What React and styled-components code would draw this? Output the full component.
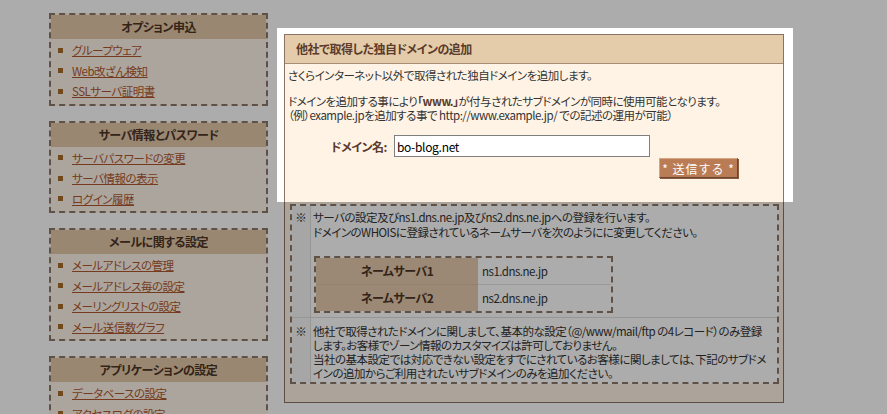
import React from "react";
import styled, { createGlobalStyle } from "styled-components";

const menus = [
    {
        title: "オプション申込",
        items: ["グループウェア", "Web改ざん検知", "SSLサーバ証明書"],
    },
    {
        title: "サーバ情報とパスワード",
        items: ["サーバパスワードの変更", "サーバ情報の表示", "ログイン履歴"],
    },
    {
        title: "メールに関する設定",
        items: ["メールアドレスの管理", "メールアドレス毎の設定", "メーリングリストの設定", "メール送信数グラフ"],
    },
    {
        title: "アプリケーションの設定",
        items: ["データベースの設定", "アクセスログの設定", "CGI・SSIの設定"],
    },
];

const nameServers = [
    { label: "ネームサーバ1", value: "ns1.dns.ne.jp" },
    { label: "ネームサーバ2", value: "ns2.dns.ne.jp" },
];

export default function App() {
    return (
        <>
            <GlobalStyle />
            <Page>
                <Sidebar>
                    {menus.map((menu) => (
                        <MenuBox key={menu.title}>
                            <MenuTitle>{menu.title}</MenuTitle>
                            <MenuList>
                                {menu.items.map((item) => (
                                    <MenuItem key={item}>
                                        <MenuLink href="#">{item}</MenuLink>
                                    </MenuItem>
                                ))}
                            </MenuList>
                        </MenuBox>
                    ))}
                </Sidebar>

                <Main>
                    <Panel>
                        <PanelTitle>他社で取得した独自ドメインの追加</PanelTitle>
                        <PanelBody>
                            <Lead>さくらインターネット以外で取得された独自ドメインを追加します。</Lead>
                            <Lead $gap>
                                ドメインを追加する事により<strong>「www.」</strong>が付与されたサブドメインが同時に使用可能となります。
                                <br />
                                （例）example.jpを追加する事で http://www.example.jp/ での記述の運用が可能）
                            </Lead>

                            <FormRow>
                                <FieldLabel>ドメイン名:</FieldLabel>
                                <DomainInput type="text" defaultValue="bo-blog.net" />
                            </FormRow>
                            <ButtonRow>
                                <SubmitButton type="button">* 送信する *</SubmitButton>
                            </ButtonRow>

                            <NoteBox>
                                <NoteRow>
                                    <NoteMark>※</NoteMark>
                                    <NoteText>
                                        サーバの設定及びns1.dns.ne.jp及びns2.dns.ne.jpへの登録を行います。
                                        <br />
                                        ドメインのWHOISに登録されているネームサーバを次のようにに変更してください。
                                        <NsTable>
                                            {nameServers.map((ns, i) => (
                                                <React.Fragment key={ns.label}>
                                                    <NsHead $last={i === nameServers.length - 1}>{ns.label}</NsHead>
                                                    <NsValue $last={i === nameServers.length - 1}>{ns.value}</NsValue>
                                                </React.Fragment>
                                            ))}
                                        </NsTable>
                                    </NoteText>
                                </NoteRow>
                                <NoteRow $divided>
                                    <NoteMark $dense>※</NoteMark>
                                    <NoteText $dense>
                                        他社で取得されたドメインに関しまして、基本的な設定（@/www/mail/ftp の4レコード）のみ登録
                                        <br />
                                        します。お客様でゾーン情報のカスタマイズは許可しておりません。
                                        <br />
                                        当社の基本設定では対応できない設定をすでにされているお客様に関しましては、下記のサブドメ
                                        <br />
                                        インの追加からご利用されたいサブドメインのみを追加ください。
                                    </NoteText>
                                </NoteRow>
                            </NoteBox>
                        </PanelBody>
                    </Panel>
                </Main>
            </Page>
            <Spotlight />
        </>
    );
}

const GlobalStyle = createGlobalStyle`
    html, body {
        margin: 0;
        background: #fff;
        overflow: hidden;
    }
    body {
        font-family: "Noto Sans CJK JP", "Noto Sans", sans-serif;
        font-size: 11.5px;
        letter-spacing: -0.5px;
        color: #333;
        font-feature-settings: "palt";
    }
`
const Page = styled.div`
    display: flex;
    align-items: flex-start;
    gap: 16px;
    height: 414px;
    overflow: hidden;
    padding: 13px 0 0 49px;
`
const Sidebar = styled.nav`
    width: 219px;
    display: flex;
    flex-direction: column;
    gap: 15px;
`
const MenuBox = styled.section`
    border: 2px dashed #8f7868;
    background: #fff5ea;
`
const MenuTitle = styled.h3`
    margin: 0;
    height: 24px;
    line-height: 24px;
    background: #e3c9a9;
    text-align: center;
    font-size: 12px;
    font-weight: bold;
    color: #4d3425;
`
const MenuList = styled.ul`
    list-style: none;
    margin: 0;
    padding: 1px 0 2px 7px;
`
const MenuItem = styled.li`
    display: flex;
    align-items: center;
    gap: 9px;
    height: 20.5px;
    &::before {
        content: "";
        width: 5px;
        height: 5px;
        background: #a86d2b;
    }
`
const MenuLink = styled.a`
    color: #b0582e;
    text-decoration: underline;
`
const Main = styled.main`
    margin-top: 21px;
    width: 500px;
`
const Panel = styled.section`
    border: 1px solid #8c7262;
    background: #fff3e6;
    padding-bottom: 18px;
`
const PanelTitle = styled.h2`
    margin: 0;
    height: 28px;
    line-height: 28px;
    padding-left: 11px;
    background: #e4cba9;
    border-bottom: 1px solid #a88c74;
    font-size: 12px;
    font-weight: bold;
    color: #5b3b2b;
`
const PanelBody = styled.div`
    padding: 4px 3px 0;
`
const Lead = styled.p`
    margin: ${(props) => (props.$gap ? "12px 0 0" : "0")};
    line-height: 14px;
    strong {
        color: #5b3b2b;
    }
`
const FormRow = styled.div`
    display: flex;
    align-items: center;
    gap: 7px;
    margin-top: 13px;
    padding-left: 43px;
`
const FieldLabel = styled.label`
    font-weight: bold;
    font-size: 12px;
    color: #5a3a2a;
`
const DomainInput = styled.input`
    box-sizing: border-box;
    width: 256px;
    height: 22px;
    border: 1px solid #7f7f7f;
    padding: 0 2px;
    font-family: "Noto Sans CJK JP", sans-serif;
    font-size: 12px;
    letter-spacing: -0.3px;
    color: #000;
    background: #fff;
    outline: none;
`
const ButtonRow = styled.div`
    display: flex;
    justify-content: flex-end;
    margin-top: 1px;
    padding-right: 42px;
`
const SubmitButton = styled.button`
    box-sizing: border-box;
    width: 79px;
    height: 20px;
    padding: 0;
    background: #b97c55;
    color: #fff;
    border: 1px solid;
    border-color: #d6a584 #6e4630 #6e4630 #d6a584;
    box-shadow: 1px 1px 0 #8a5c40;
    font-family: "Noto Sans CJK JP", sans-serif;
    font-size: 12px;
    letter-spacing: 1px;
`
const NoteBox = styled.div`
    margin: 26px 1px 0 2px;
    border: 2px dashed #8f7868;
    background: #fff;
`
const NoteRow = styled.div`
    display: grid;
    grid-template-columns: 19px 1fr;
    border-top: ${(props) => (props.$divided ? "1px solid #dedede" : "none")};
`
const NoteMark = styled.div`
    text-align: center;
    background: #f7f7f7;
    border-right: 1px solid #dedede;
    padding-top: ${(props) => (props.$dense ? "6px" : "4px")};
    line-height: ${(props) => (props.$dense ? "14px" : "15px")};
    letter-spacing: 0;
`
const NoteText = styled.div`
    padding: ${(props) => (props.$dense ? "6px 6px 2px 2px" : "4px 6px 4px 2px")};
    line-height: ${(props) => (props.$dense ? "14px" : "15px")};
    white-space: nowrap;
`
const NsTable = styled.div`
    box-sizing: border-box;
    width: 299px;
    margin: 16px 0 0 1px;
    display: grid;
    grid-template-columns: 162px 1fr;
    border: 2px dashed #8f7868;
`
const NsHead = styled.div`
    height: 26px;
    line-height: 26px;
    text-align: center;
    background: #e6ccaf;
    font-weight: bold;
    font-size: 12px;
    color: #4d3425;
    border-bottom: ${(props) => (props.$last ? "none" : "1px solid #d9c2a6")};
`
const NsValue = styled.div`
    height: 26px;
    line-height: 26px;
    padding-left: 4px;
    background: #fff;
    border-bottom: ${(props) => (props.$last ? "none" : "1px solid #e4e4e4")};
`
const Spotlight = styled.div`
    position: fixed;
    left: 277px;
    top: 28px;
    width: 516px;
    height: 174px;
    box-shadow: 0 0 0 3000px rgba(0, 0, 0, 0.325);
    pointer-events: none;
`
